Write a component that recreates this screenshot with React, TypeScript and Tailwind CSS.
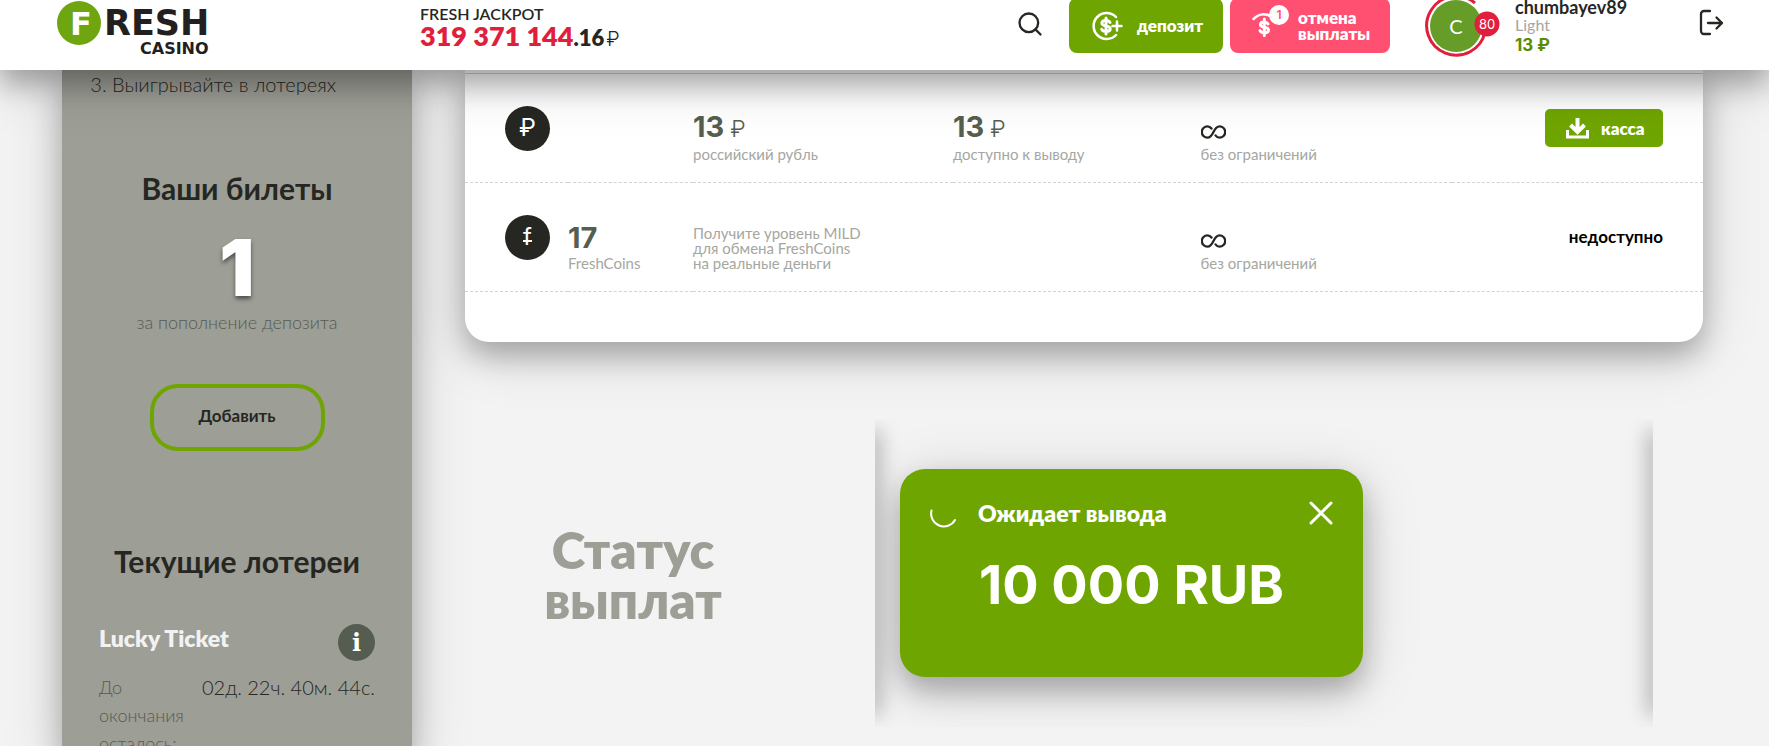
import { Search } from 'lucide-react'
import type { ReactNode } from 'react'

type Balance = {
  id: string
  symbol: ReactNode
  coins?: { amount: string; label: string }
  amount?: string
  amountLabel: ReactNode
  available?: string
  limit: string
  canWithdraw: boolean
}

const balances: Balance[] = [
  {
    id: 'rub',
    symbol: '₽',
    amount: '13',
    amountLabel: 'российский рубль',
    available: '13',
    limit: 'без ограничений',
    canWithdraw: true,
  },
  {
    id: 'fresh',
    symbol: (
      <span className="relative">
        f
        <span className="absolute inset-x-0 top-[19px] h-0.5 bg-white" />
      </span>
    ),
    coins: { amount: '17', label: 'FreshCoins' },
    amountLabel: (
      <>
        Получите уровень MILD
        <br />
        для обмена FreshCoins
        <br />
        на реальные деньги
      </>
    ),
    limit: 'без ограничений',
    canWithdraw: false,
  },
]

function Logo() {
  return (
    <svg width="156" height="56" viewBox="0 0 156 56" role="img" aria-label="Fresh Casino">
      <circle cx="22" cy="23" r="22" fill="#6fa50f" />
      <g fontWeight="700" className="font-['DejaVu_Sans']">
        <text x="13" y="35" fontSize="32" fill="#fff">F</text>
        <text x="47" y="35" fontSize="35" fill="#231f20">RESH</text>
        <text x="83" y="54" fontSize="16" fill="#231f20">CASINO</text>
      </g>
    </svg>
  )
}

function DepositIcon() {
  return (
    <svg width="32" height="30" viewBox="0 0 32 30" fill="none" stroke="#fff" strokeWidth="3" strokeLinecap="round">
      <path d="M25 6A13 13 0 1 0 25 24" strokeWidth="2.5" />
      <path d="M19 11.500c-1-1.700-2.500-2-4.200-2-2.300 0-3.900 1-3.900 2.800 0 3.800 8.300 1.600 8.300 5.400 0 1.800-1.700 2.900-4.200 2.900-2 0-3.500-.6-4.300-2.200M15 7v16" />
      <path d="M26 10.500v9M21.500 15h9" strokeWidth="2.500" />
    </svg>
  )
}

function CancelIcon() {
  return (
    <svg width="26" height="28" viewBox="0 0 26 28" fill="none" stroke="#fff" strokeWidth="3" strokeLinecap="round">
      <path d="M1.500 7C7 1.500 14 1 20 5" strokeWidth="2.500" />
      <path d="M16 12c-1-1.700-2.300-2-3.800-2-2.300 0-3.700 1-3.700 2.700 0 3.600 8 1.500 8 5.200 0 1.800-1.700 2.900-4.200 2.900-2 0-3.500-.6-4.300-2.200M12.300 7v16.500" />
    </svg>
  )
}

function InfinityIcon() {
  return (
    <svg width="25" height="14" viewBox="0 0 25 14" fill="none" stroke="#262722" strokeWidth="2.300" strokeLinecap="round">
      <path d="M10.500 3.500C9 1.500 8 1.300 6.500 1.300a5.500 5.500 0 0 0 0 11.400c2.500 0 4-1.600 6-5.700s3.500-5.700 6-5.700a5.500 5.500 0 0 1 0 11.400c-1.500 0-2.500-.3-4-2.300" />
    </svg>
  )
}

function LogoutIcon() {
  return (
    <svg width="25" height="28" viewBox="0 0 25 28" fill="none" stroke="currentColor" strokeWidth="2.300" strokeLinecap="round" strokeLinejoin="round">
      <path d="M11 3H5a3 3 0 0 0-3 3v17a3 3 0 0 0 3 3h6M9 15h14M17.500 9.500 23 15l-5.500 5.500" />
    </svg>
  )
}

function Header() {
  return (
    <header className="relative z-10 flex h-[70px] shrink-0 items-start bg-white pr-[45px] pl-14 shadow-[0_14px_28px_rgba(0,0,0,0.28),0_10px_60px_rgba(0,0,0,0.17)]">
      <a href="#" className="block w-[364px] shrink-0 pl-px">
        <Logo />
      </a>
      <div className="pt-1 text-[#262722]">
        <div className="text-base leading-5 font-semibold">FRESH JACKPOT</div>
        <div className="flex items-baseline leading-6 font-extrabold">
          <span className="text-[27px] text-[#e01f3d]">319 371 144</span>
          <span className="text-[22px]">.16</span>
          <span className="ml-0.5 font-['Inter'] text-xl leading-6 font-light">₽</span>
        </div>
      </div>

      <div className="ml-auto flex items-start">
        <button type="button" aria-label="Поиск" className="mt-2.5 mr-[25px] text-[#262722]">
          <Search size={28} strokeWidth={2} />
        </button>
        <button
          type="button"
          className="-mt-0.5 mr-[7px] flex h-[55px] w-[154px] items-center gap-3.5 rounded-lg bg-[#6fa500] pl-[22px] text-[17px] font-extrabold text-white"
        >
          <DepositIcon />
          депозит
        </button>
        <button
          type="button"
          className="relative -mt-0.5 flex h-[55px] w-40 items-center gap-5 rounded-lg bg-[#ff5072] pl-[22px] text-left text-[17px] leading-4 font-extrabold text-white"
        >
          <CancelIcon />
          <span>
            отмена
            <br />
            выплаты
          </span>
          <span className="absolute top-[7px] left-[39px] flex size-5 items-center justify-center rounded-full bg-white font-['Inter'] text-xs font-semibold text-[#ff5072]">
            1
          </span>
        </button>

        <div className="relative ml-[35px] h-[58px] w-[76px]">
          <svg width="76" height="58" viewBox="0 0 76 58" fill="none">
            <circle cx="31" cy="26" r="26" fill="#669d29" />
            <path d="M50 3A29.500 29.500 0 1 0 60 32" stroke="#e01f3d" strokeWidth="3" />
            <circle cx="62" cy="24" r="12.500" fill="#e01f3d" />
          </svg>
          <span className="absolute top-3.5 left-[18px] w-[26px] text-center text-xl leading-6 text-white">C</span>
          <span className="absolute top-3 left-[49px] w-[26px] text-center font-['Inter'] text-[13px] leading-6 text-white">80</span>
        </div>
        <div className="-mt-[3px] ml-3.5 w-[184px] whitespace-nowrap">
          <div className="text-lg leading-5 font-bold text-[#262722]">chumbayev89</div>
          <div className="text-base leading-4 text-[#a5a79f]">Light</div>
          <div className="font-['Inter'] text-[17px] leading-6 font-bold text-[#5b8c00]">13 ₽</div>
        </div>
        <button type="button" aria-label="Выход" className="mt-2 text-[#262722]">
          <LogoutIcon />
        </button>
      </div>
    </header>
  )
}

function Sidebar() {
  return (
    <aside className="w-[350px] shrink-0 self-stretch bg-[#9d9e96] text-[#262722] shadow-[0_14px_28px_rgba(0,0,0,0.25),0_10px_60px_rgba(0,0,0,0.15)]">
      <ol start={3} className="list-decimal pl-[50px] text-xl leading-7 font-light">
        <li>Выигрывайте в лотереях</li>
      </ol>

      <section className="mt-[70px] flex flex-col items-center">
        <h2 className="text-3xl leading-10 font-bold">Ваши билеты</h2>
        <div className="mt-5 font-['Inter'] text-[78px] leading-[80px] font-black text-white [text-shadow:0_3px_4px_rgba(0,0,0,0.5)]">
          1
        </div>
        <div className="text-lg leading-7 font-light text-[#555c50]">за пополнение депозита</div>
        <button
          type="button"
          className="mt-12 h-[67px] w-[175px] rounded-[28px] border-4 border-[#6fa500] pb-1 text-[17px] font-bold"
        >
          Добавить
        </button>
      </section>

      <section className="mt-[90px] px-[37px]">
        <h2 className="text-center text-3xl leading-10 font-bold whitespace-nowrap">Текущие лотереи</h2>
        <div className="mt-[43px] flex items-start justify-between">
          <h3 className="text-[23px] leading-7 font-extrabold text-[#f2f2f2]">Lucky Ticket</h3>
          <button
            type="button"
            aria-label="Информация"
            className="flex size-[37px] items-center justify-center rounded-full bg-[#555c50] font-['DejaVu_Serif'] text-2xl leading-none font-bold text-white"
          >
            i
          </button>
        </div>
        <div className="mt-3 flex justify-between leading-7 font-light">
          <div className="w-[90px] text-lg leading-7 text-[#555c50]">До окончания осталось:</div>
          <div className="text-xl leading-7 whitespace-nowrap">02д. 22ч. 40м. 44с.</div>
        </div>
      </section>
    </aside>
  )
}

function Amount({ value, currency }: { value: string; currency?: string }) {
  return (
    <div className="mb-0.5 font-['Inter'] text-[29px] leading-8 font-bold text-[#555e4f]">
      {value}
      {currency && <span className="ml-1.5 text-[23px] font-light">{currency}</span>}
    </div>
  )
}

function BalanceTable() {
  return (
    <div className="rounded-b-3xl bg-white pb-[50px] shadow-[0_14px_28px_rgba(0,0,0,0.25),0_10px_60px_rgba(0,0,0,0.15)]">
      <div className="h-1 border-b border-[#d0d0d0]" />
      <table className="w-full table-fixed border-separate border-spacing-0 text-left text-[15px] leading-[15px] text-[#a5a79f]">
        <colgroup>
          <col className="w-[103px]" />
          <col className="w-[125px]" />
          <col className="w-[21%]" />
          <col className="w-[20%]" />
          <col />
          <col />
        </colgroup>
        <tbody>
          {balances.map(row => (
            <tr key={row.id} className="h-[109px] [&>td]:border-b [&>td]:border-dashed [&>td]:border-[#d3d3d3]">
              <td className="pl-10 align-middle">
                <div className="flex size-[45px] items-center justify-center rounded-full bg-[#262722] font-['Inter'] text-2xl text-white">
                  {row.symbol}
                </div>
              </td>
              <td className="pb-5 align-bottom">
                {row.coins && (
                  <>
                    <Amount value={row.coins.amount} />
                    {row.coins.label}
                  </>
                )}
              </td>
              <td className="pb-5 align-bottom">
                {row.amount && <Amount value={row.amount} currency="₽" />}
                {row.amountLabel}
              </td>
              <td className="pb-5 align-bottom">
                {row.available && (
                  <>
                    <Amount value={row.available} currency="₽" />
                    доступно к выводу
                  </>
                )}
              </td>
              <td className="pb-5 align-bottom">
                <div className="mb-2"><InfinityIcon /></div>
                {row.limit}
              </td>
              <td className="pr-10 text-right align-middle">
                {row.canWithdraw ? (
                  <button
                    type="button"
                    className="inline-flex h-[38px] w-[118px] items-center gap-3 rounded-[5px] bg-[#6fa500] pl-[21px] text-[17px] font-extrabold text-white"
                  >
                    <svg width="23" height="21" viewBox="0 0 23 21" fill="none" stroke="#fff" strokeWidth="4">
                      <path d="M11.500 0v12M4.500 7l7 7 7-7" />
                      <path d="M1.500 12v7h20v-7" strokeWidth="3" />
                    </svg>
                    касса
                  </button>
                ) : (
                  <span className="text-[17px] font-bold text-black">недоступно</span>
                )}
              </td>
            </tr>
          ))}
        </tbody>
      </table>
    </div>
  )
}

function PayoutStatus() {
  return (
    <section className="mt-[77px] mr-[50px] flex items-center">
      <h2 className="w-[410px] shrink-0 pt-1 pr-[74px] text-center text-[51px] leading-[50px] font-extrabold text-[#9d9e96]">
        Статус
        <br />
        выплат
      </h2>
      <div className="relative flex-1 overflow-hidden px-[25px] py-[50px]">
        {/* Edge shadows of the slider */}
        <div className="absolute inset-y-4 -left-1 w-1 shadow-[0_0_20px_4px_rgba(0,0,0,0.35)]" />
        <div className="absolute inset-y-4 -right-1 w-1 shadow-[0_0_20px_4px_rgba(0,0,0,0.35)]" />

        <article className="h-52 w-[463px] rounded-[25px] bg-[#6fa500] px-[30px] pt-7 text-white shadow-[0_14px_28px_rgba(0,0,0,0.25),0_10px_60px_rgba(0,0,0,0.15)]">
          <div className="flex h-8 items-center">
            <svg width="26" height="30" viewBox="0 0 26 30" fill="none" stroke="#fff" strokeWidth="2" strokeLinecap="round">
              <path d="M1.500 12.500A12.800 12.800 0 0 0 25 22" />
            </svg>
            <h3 className="ml-[22px] text-[23px] font-extrabold">Ожидает вывода</h3>
            <button type="button" aria-label="Закрыть" className="ml-auto">
              <svg width="24" height="24" viewBox="0 0 24 24" stroke="#fff" strokeWidth="3" strokeLinecap="round">
                <path d="M2 2 22 22M22 2 2 22" />
              </svg>
            </button>
          </div>
          <div className="mt-6 text-center font-['Inter'] text-[54px] leading-[64px] font-bold whitespace-nowrap">10 000 RUB</div>
        </article>
      </div>
    </section>
  )
}

export default function App() {
  return (
    <div className="flex h-screen flex-col overflow-hidden bg-[#f3f3f3] font-['Lato','Inter',sans-serif]">
      <Header />
      <div className="flex flex-1 items-start pr-[66px] pl-[62px]">
        <Sidebar />
        <main className="ml-[53px] min-w-0 flex-1">
          <BalanceTable />
          <PayoutStatus />
        </main>
      </div>
    </div>
  )
}
